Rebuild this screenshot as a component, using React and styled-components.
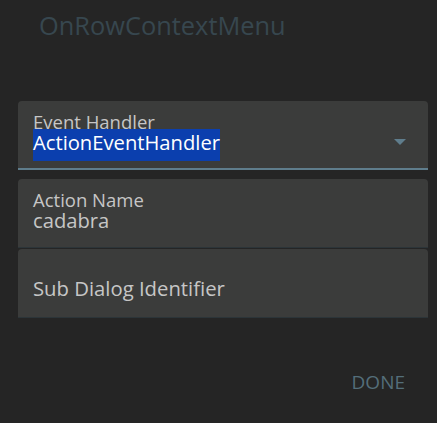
import React from "react";
import styled, { createGlobalStyle } from "styled-components";

const GlobalStyle = createGlobalStyle`
  html, body {
    margin: 0;
    padding: 0;
    background: #252525;
  }
  body {
    font-family: "Open Sans", "Noto Sans", sans-serif;
  }
`;

//styles
const Dialog = styled.div`
  width: 437px;
  height: 423px;
  box-sizing: border-box;
  display: flex;
  flex-direction: column;
  background: #252525;
`;
const Title = styled.h2`
  margin: 0;
  padding: 9px 0 0 39px;
  font-size: 25.4px;
  font-weight: 400;
  line-height: 32px;
  color: #37474f;
`;
const Fields = styled.div`
  display: flex;
  flex-direction: column;
  margin: 60px 9px 0 18px;
`;
const Field = styled.div`
  position: relative;
  display: flex;
  flex-direction: column;
  align-items: flex-start;
  box-sizing: border-box;
  height: 69px;
  margin-bottom: ${(props) => props.gap || 0}px;
  padding: 13px 15px 0 15px;
  background: #3b3c3b;
  border-radius: 4px 4px 0 0;
  border-bottom: ${(props) =>
    props.active ? "2px solid #5f7d8c" : "1px solid #2c3539"};
`;
const Label = styled.span`
  line-height: 16px;
  color: #c6c6c6;
  font-size: ${(props) => (props.floating ? "18.5px" : "20.3px")};
  transform: ${(props) => (props.floating ? "none" : "translateY(17.5px)")};
`;
const Value = styled.div`
  font-size: 20.2px;
  line-height: 24px;
  color: #c6c6c6;
`;
const Selection = styled.span`
  display: inline-block;
  height: 32px;
  margin-top: -1px;
  line-height: 27px;
  background: #0b3fae;
  color: #ffffff;
`;
const Caret = styled.svg`
  position: absolute;
  right: 22px;
  top: 38px;
`;
const Actions = styled.div`
  display: flex;
  justify-content: flex-end;
  margin-top: 48px;
  padding-right: 24px;
`;
const TextButton = styled.button`
  background: none;
  border: none;
  padding: 4px 8px;
  font-family: inherit;
  font-size: 19px;
  line-height: 24px;
  color: #546e7a;
  text-transform: uppercase;
  cursor: pointer;
`;

const App = () => {
  return (
    <Dialog>
      <GlobalStyle />
      <Title>OnRowContextMenu</Title>
      <Fields>
        <Field active gap={9}>
          <Label floating>Event Handler</Label>
          <Value>
            <Selection>ActionEventHandler</Selection>
          </Value>
          <Caret width="12" height="6" viewBox="0 0 12 6">
            <path d="M0 0h12L6 6z" fill="#5f7d8c" />
          </Caret>
        </Field>
        <Field gap={1}>
          <Label floating>Action Name</Label>
          <Value>cadabra</Value>
        </Field>
        <Field>
          <Label>Sub Dialog Identifier</Label>
        </Field>
      </Fields>
      <Actions>
        <TextButton>Done</TextButton>
      </Actions>
    </Dialog>
  );
};

export default App;
